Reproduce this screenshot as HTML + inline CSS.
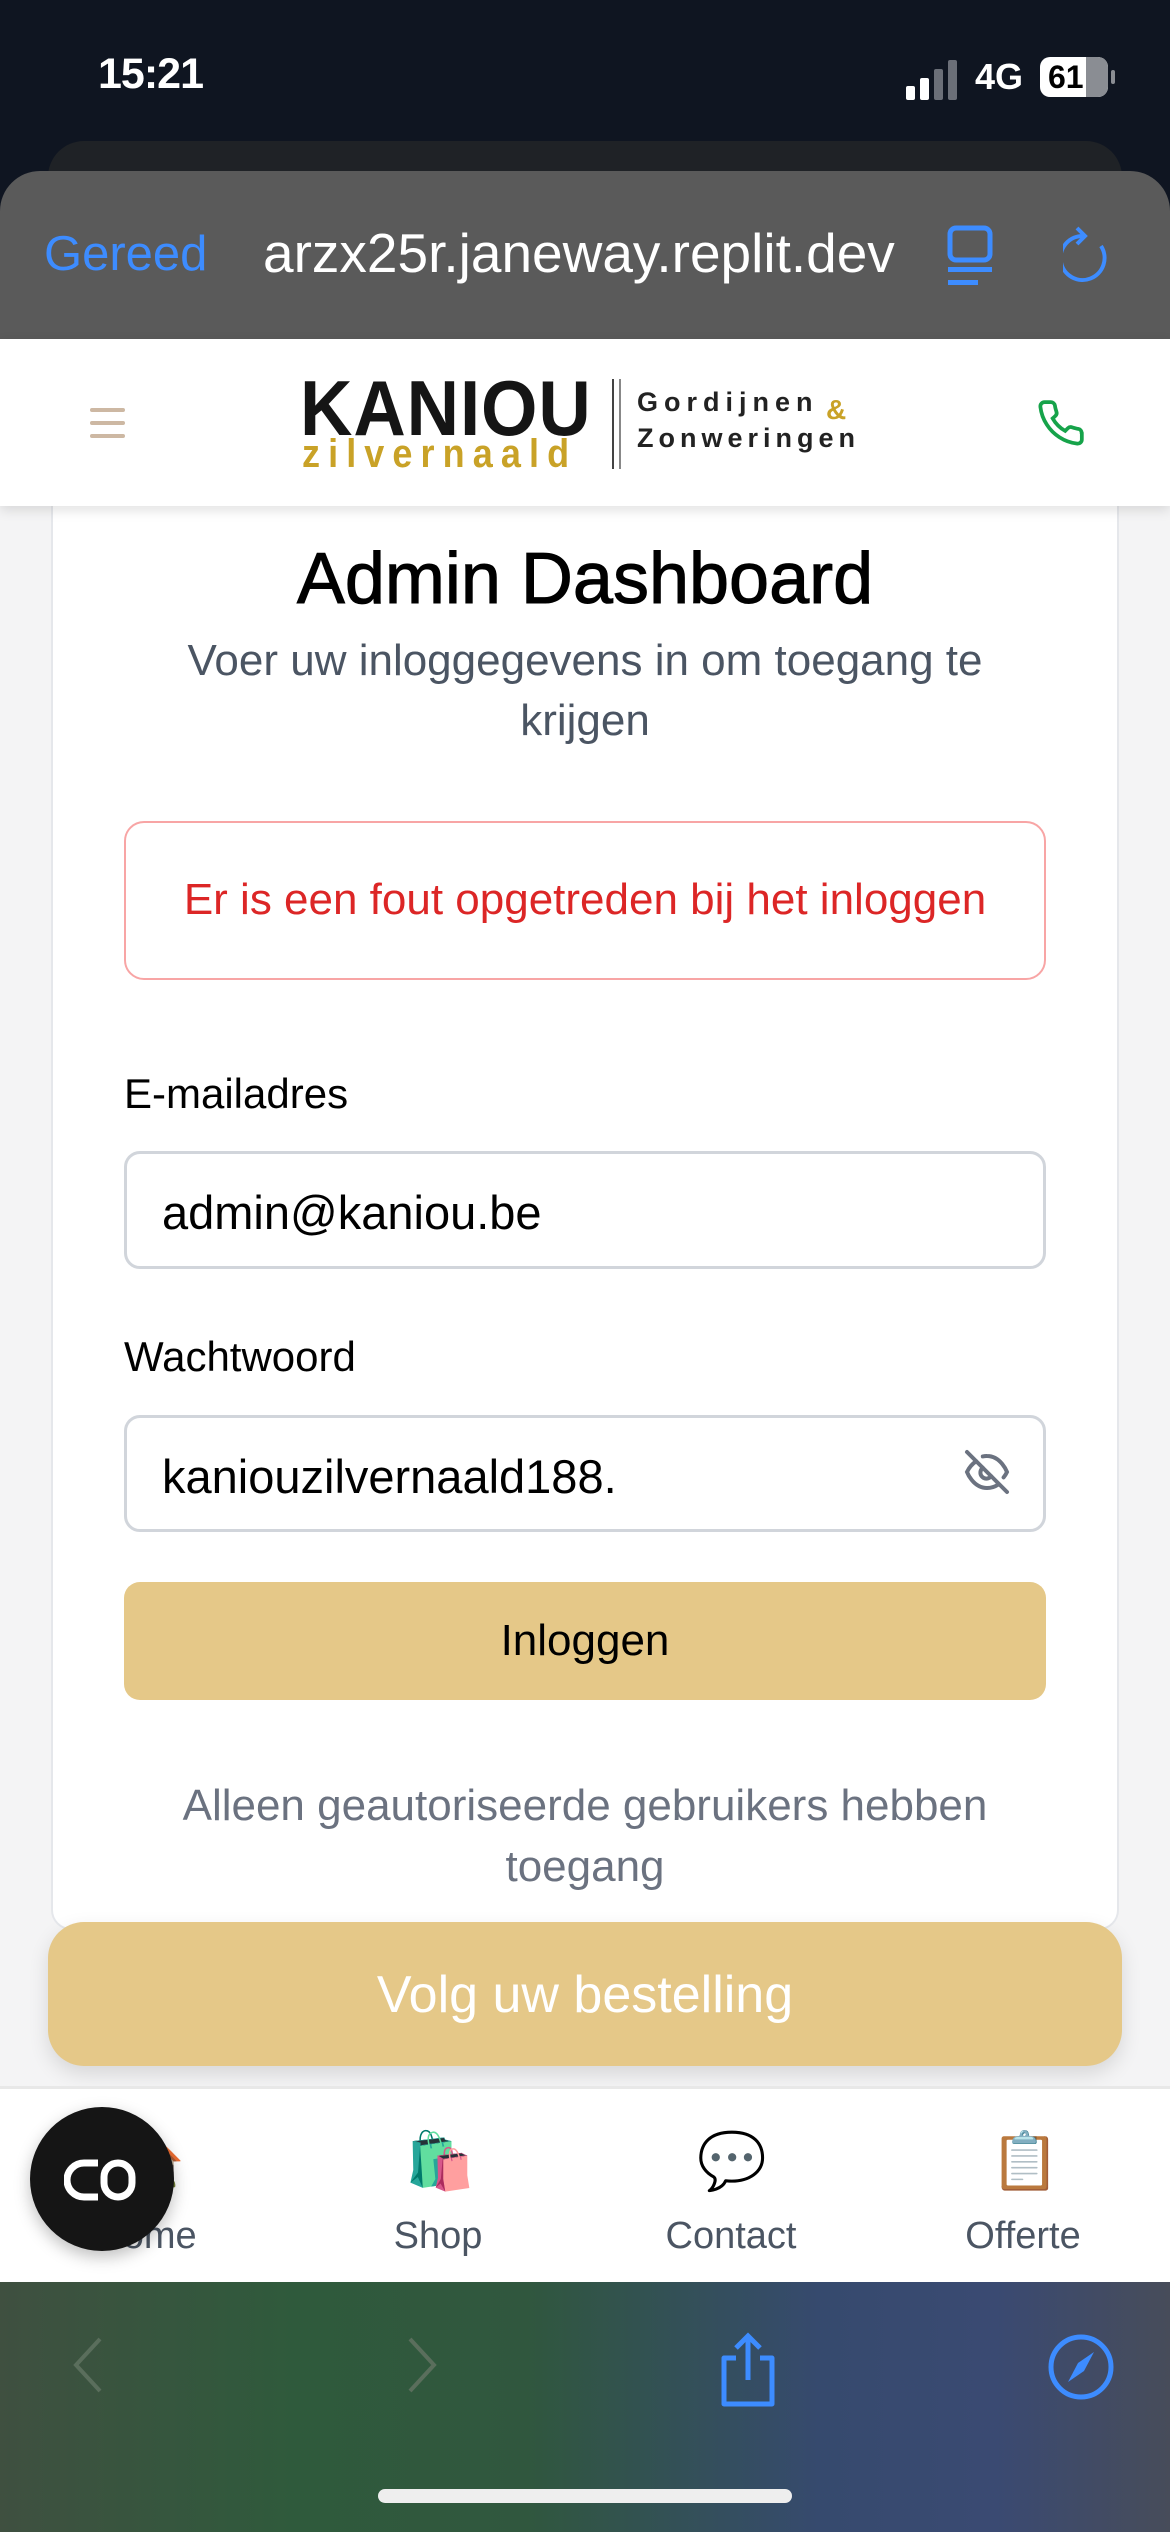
<!DOCTYPE html>
<html><head><meta charset="utf-8"><style>
*{margin:0;padding:0;box-sizing:border-box}
body{width:1170px;height:2532px;overflow:hidden;background:#0f1521;font-family:"Liberation Sans",sans-serif;position:relative}
.abs{position:absolute}
.t{white-space:nowrap}
</style></head><body>
<!-- status bar -->
<div class="abs t" style="left:98px;top:50px;color:#fff;font-size:43px;font-weight:bold;letter-spacing:-1px">15:21</div>
<div class="abs" style="left:906px;top:86px;width:9px;height:14px;background:#fff;border-radius:2px"></div>
<div class="abs" style="left:920px;top:78px;width:9px;height:22px;background:#fff;border-radius:2px"></div>
<div class="abs" style="left:934px;top:69px;width:9px;height:31px;background:#6b6f78;border-radius:2px"></div>
<div class="abs" style="left:948px;top:60px;width:9px;height:40px;background:#6b6f78;border-radius:2px"></div>
<div class="abs t" style="left:975px;top:56px;color:#fff;font-size:36px;font-weight:bold">4G</div>
<div class="abs" style="left:1040px;top:57px;width:68px;height:40px;background:#fff;border-radius:10px;overflow:hidden"><div style="position:absolute;right:0;top:0;width:22px;height:40px;background:#8a8d93"></div><div style="position:absolute;left:8px;top:2px;font-size:32px;font-weight:bold;color:#000">61</div></div>
<div class="abs" style="left:1111px;top:70px;width:4px;height:14px;background:#8a8d93;border-radius:2px"></div>
<!-- tab behind -->
<div class="abs" style="left:48px;top:141px;width:1074px;height:100px;background:#1f2226;border-radius:36px 36px 0 0"></div>
<!-- URL bar -->
<div class="abs" style="left:0;top:171px;width:1170px;height:170px;background:#5a5a5a;border-radius:40px 40px 0 0"></div>
<div class="abs t" style="left:44px;top:226px;color:#3d8cff;font-size:49px">Gereed</div>
<div class="abs t" style="left:263px;top:221px;color:#fff;font-size:55px">arzx25r.janeway.replit.dev</div>
<svg class="abs" style="left:946px;top:225px" width="56" height="62" viewBox="0 0 56 62"><rect x="4" y="3" width="40" height="32" rx="6" fill="none" stroke="#3d8cff" stroke-width="5"/><rect x="2" y="42" width="44" height="5" fill="#3d8cff"/><rect x="2" y="55" width="30" height="5" fill="#3d8cff"/></svg>
<svg class="abs" style="left:1063px;top:224px" width="50" height="62" viewBox="0 0 50 62"><path d="M20 12 A22 22 0 1 0 38 22" fill="none" stroke="#3d8cff" stroke-width="4"/><path d="M14 4 L22 12 L14 20" fill="none" stroke="#3d8cff" stroke-width="4"/></svg>
<!-- page bg -->
<div class="abs" style="left:0;top:339px;width:1170px;height:1750px;background:#f4f4f5"></div>
<!-- card -->
<div class="abs" style="left:51px;top:470px;width:1068px;height:1460px;background:#fff;border:2px solid #e5e7eb;border-radius:20px"></div>
<!-- header -->
<div class="abs" style="left:0;top:339px;width:1170px;height:167px;background:#fff;box-shadow:0 4px 12px rgba(0,0,0,0.12)"></div>
<div class="abs" style="left:90px;top:408px;width:35px;height:4px;background:#cdb8a3;border-radius:2px"></div>
<div class="abs" style="left:90px;top:421px;width:35px;height:4px;background:#cdb8a3;border-radius:2px"></div>
<div class="abs" style="left:90px;top:434px;width:35px;height:4px;background:#cdb8a3;border-radius:2px"></div>
<div class="abs t" style="left:300px;top:363px;font-size:78px;font-weight:bold;color:#151515;transform:scaleX(0.93);transform-origin:left;letter-spacing:1px">KANIOU</div>
<div class="abs t" style="left:302px;top:432px;font-size:40px;font-weight:bold;color:#c9a227;letter-spacing:9px;transform:scaleX(0.9);transform-origin:left">zilvernaald</div>
<div class="abs" style="left:612px;top:379px;width:2px;height:90px;background:#444"></div>
<div class="abs" style="left:619px;top:379px;width:2px;height:90px;background:#888"></div>
<div class="abs t" style="left:637px;top:387px;font-size:27px;font-weight:bold;color:#222;letter-spacing:6px">Gordijnen</div>
<div class="abs t" style="left:826px;top:394px;font-size:28px;font-weight:bold;color:#c9a227">&amp;</div>
<div class="abs t" style="left:637px;top:423px;font-size:27px;font-weight:bold;color:#222;letter-spacing:5px">Zonweringen</div>
<svg class="abs" style="left:1036px;top:398px" width="50" height="50" viewBox="0 0 24 24"><path d="M22 16.9v3a2 2 0 0 1-2.2 2 19.8 19.8 0 0 1-8.6-3.1 19.5 19.5 0 0 1-6-6A19.8 19.8 0 0 1 2.1 4.2 2 2 0 0 1 4.1 2h3a2 2 0 0 1 2 1.7c.1 1 .4 1.9.7 2.8a2 2 0 0 1-.5 2.1L8 9.8a16 16 0 0 0 6 6l1.3-1.3a2 2 0 0 1 2.1-.4c.9.3 1.8.6 2.8.7a2 2 0 0 1 1.7 2z" fill="none" stroke="#16a34a" stroke-width="1.8"/></svg>
<!-- content -->
<div class="abs t" style="left:0;width:1170px;top:538px;text-align:center;font-size:72px;font-weight:500;color:#000;-webkit-text-stroke:1px #000">Admin Dashboard</div>
<div class="abs" style="left:155px;width:860px;top:631px;text-align:center;font-size:44px;line-height:60px;color:#4b5563">Voer uw inloggegevens in om toegang te krijgen</div>
<div class="abs" style="left:124px;top:821px;width:922px;height:159px;border:2px solid #f8a5a5;border-radius:20px;background:#fff"></div>
<div class="abs t" style="left:124px;width:922px;top:875px;text-align:center;font-size:44px;color:#dc2626">Er is een fout opgetreden bij het inloggen</div>
<div class="abs t" style="left:124px;top:1070px;font-size:42px;color:#000">E-mailadres</div>
<div class="abs" style="left:124px;top:1151px;width:922px;height:118px;border:3px solid #d1d5db;border-radius:16px"></div>
<div class="abs t" style="left:162px;top:1185px;font-size:47px;color:#000">admin@kaniou.be</div>
<div class="abs t" style="left:124px;top:1333px;font-size:42px;color:#000">Wachtwoord</div>
<div class="abs" style="left:124px;top:1415px;width:922px;height:117px;border:3px solid #d1d5db;border-radius:16px"></div>
<div class="abs t" style="left:162px;top:1449px;font-size:47px;color:#000">kaniouzilvernaald188.</div>
<svg class="abs" style="left:963px;top:1448px" width="48" height="48" viewBox="0 0 24 24" fill="none" stroke="#6b7280" stroke-width="2" stroke-linecap="round"><path d="M9.9 4.2A9 9 0 0 1 12 4c7 0 10 8 10 8a13 13 0 0 1-1.7 2.7"/><path d="M6.6 6.6A13.5 13.5 0 0 0 2 12s3 8 10 8a9.7 9.7 0 0 0 5.4-1.6"/><path d="M9.9 9.9a3 3 0 1 0 4.2 4.2"/><line x1="2" y1="2" x2="22" y2="22"/></svg>
<div class="abs" style="left:124px;top:1582px;width:922px;height:118px;background:#e5c888;border-radius:16px"></div>
<div class="abs t" style="left:124px;width:922px;top:1616px;text-align:center;font-size:44px;color:#000">Inloggen</div>
<div class="abs" style="left:135px;width:900px;top:1775px;text-align:center;font-size:44px;line-height:61px;color:#6b7280">Alleen geautoriseerde gebruikers hebben toegang</div>
<!-- volg -->
<div class="abs" style="left:48px;top:1922px;width:1074px;height:144px;background:#e5c888;border-radius:36px;box-shadow:0 8px 20px rgba(0,0,0,0.12)"></div>
<div class="abs t" style="left:48px;width:1074px;top:1965px;text-align:center;font-size:52px;color:#fff">Volg uw bestelling</div>
<!-- bottom nav -->
<div class="abs" style="left:0;top:2086px;width:1170px;height:196px;background:#fff;border-top:3px solid #e8e8e8"></div>
<div class="abs t" style="left:115px;top:2128px;font-size:56px">🏠</div>
<div class="abs t" style="left:405px;top:2128px;font-size:56px">🛍️</div>
<div class="abs t" style="left:697px;top:2128px;font-size:56px">💬</div>
<div class="abs t" style="left:990px;top:2128px;font-size:56px">📋</div>
<div class="abs t" style="left:0;width:292px;top:2215px;text-align:center;font-size:38px;color:#4b5563">Home</div>
<div class="abs t" style="left:292px;width:292px;top:2215px;text-align:center;font-size:38px;color:#4b5563">Shop</div>
<div class="abs t" style="left:585px;width:292px;top:2215px;text-align:center;font-size:38px;color:#4b5563">Contact</div>
<div class="abs t" style="left:877px;width:292px;top:2215px;text-align:center;font-size:38px;color:#4b5563">Offerte</div>
<div class="abs" style="left:30px;top:2107px;width:144px;height:144px;background:#151515;border-radius:50%;box-shadow:0 6px 16px rgba(0,0,0,0.25)"></div>
<svg class="abs" style="left:64px;top:2155px" width="76" height="50" viewBox="0 0 76 50"><path d="M34 8 H20 A16 16 0 0 0 20 42 H34" fill="none" stroke="#fff" stroke-width="7"/><rect x="40" y="8" width="28" height="34" rx="14" fill="none" stroke="#fff" stroke-width="7"/></svg>
<!-- safari toolbar -->
<div class="abs" style="left:0;top:2282px;width:1170px;height:250px;background:linear-gradient(90deg,#3f5040 0%,#2f5a3c 25%,#30573e 45%,#364a6e 70%,#3a4a72 85%,#474c5a 100%)"></div>
<svg class="abs" style="left:68px;top:2335px" width="40" height="60" viewBox="0 0 40 60"><path d="M32 4 L8 30 L32 56" fill="none" stroke="#5a6e5c" stroke-width="4"/></svg>
<svg class="abs" style="left:402px;top:2335px" width="40" height="60" viewBox="0 0 40 60"><path d="M8 4 L32 30 L8 56" fill="none" stroke="#5a6e5c" stroke-width="4"/></svg>
<svg class="abs" style="left:718px;top:2332px" width="60" height="76" viewBox="0 0 60 76"><path d="M18 26 H6 V72 H54 V26 H42" fill="none" stroke="#3d8cff" stroke-width="5" stroke-linejoin="round"/><path d="M30 48 V4 M18 16 L30 4 L42 16" fill="none" stroke="#3d8cff" stroke-width="5"/></svg>
<svg class="abs" style="left:1046px;top:2332px" width="70" height="70" viewBox="0 0 70 70"><circle cx="35" cy="35" r="30" fill="none" stroke="#3d8cff" stroke-width="5"/><path d="M48 20 L38 39 L22 50 L32 31 Z" fill="#3d8cff"/></svg>
<div class="abs" style="left:378px;top:2489px;width:414px;height:14px;background:#eee;border-radius:7px"></div>
</body></html>
